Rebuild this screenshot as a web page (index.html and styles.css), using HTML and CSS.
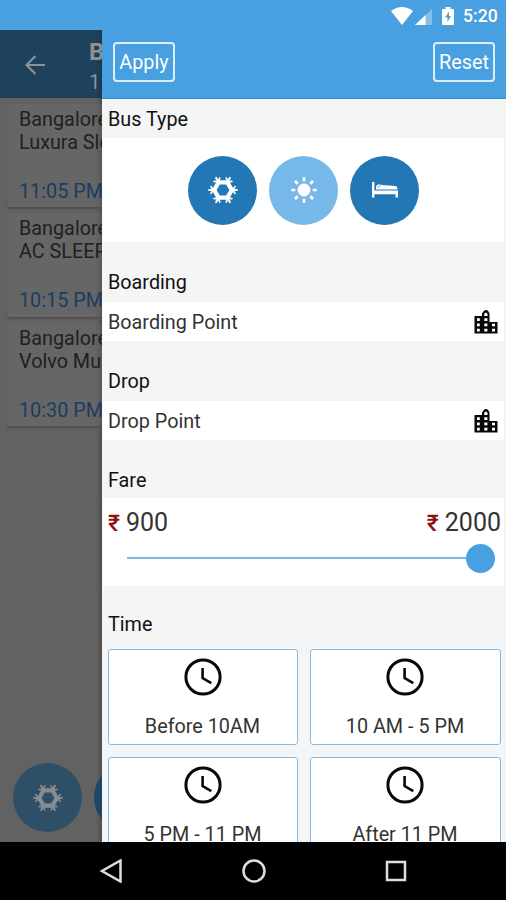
FILE: index.html
```html
<!DOCTYPE html>
<html lang="en">
<head>
<meta charset="utf-8">
<title>Bus filters</title>
<link rel="stylesheet" href="styles.css">
</head>
<body>
<svg class="defs" width="0" height="0">
  <symbol id="snow" viewBox="-15 -15 30 30">
    <g fill="none" stroke="currentColor" stroke-linecap="round">
      <path class="ring" stroke-linejoin="round" d="M8.8 0 4.4 7.6H-4.4L-8.8 0-4.4-7.6H4.4Z"/>
      <path stroke-width="2.2" d="M8 0H13.8M4 7 6.8 12M-4 7-6.8 12M-8 0H-13.8M-4-7-6.8-12M4-7 6.8-12"/>
      <path stroke-width="1.7" d="M12-3.3 9.5 0 12 3.3M8.9 8.7 4.8 8.2 3.2 12M-3.2 12-4.8 8.2-8.9 8.7M-12 3.3-9.5 0-12-3.3M-8.9-8.7-4.8-8.2-3.2-12M3.2-12 4.8-8.2 8.9-8.7"/>
    </g>
  </symbol>
  <symbol id="city" viewBox="0 0 24 24">
    <path fill="currentColor" fill-rule="evenodd" d="M.5 6H8V3.5L10 .8Q12 -.8 14 .8L15.5 3.5V12H23.5V23.5H.5ZM3 8.3V11H5.8V8.3ZM3 13.6V16.2H5.8V13.6ZM3 18.8V21.4H5.8V18.8ZM10.2 3.8V6H13.5V3.8L12 2.4ZM10.3 8.3V11H13.4V8.3ZM10.3 13.6V16.2H13.4V13.6ZM10.3 18.8V21.4H13.4V18.8ZM18 13.8V16.2H21V13.8ZM18 18.8V21.4H21V18.8Z"/>
  </symbol>
  <symbol id="clock" viewBox="0 0 38 38">
    <g fill="none" stroke="currentColor">
      <circle cx="19" cy="19" r="17.1" stroke-width="3"/>
      <path stroke-width="2.6" d="M18.6 10V20L27.3 25.2"/>
    </g>
  </symbol>
</svg>
<div class="phone">
  <div class="status">
    <svg class="wifi" viewBox="0 0 22 18"><path fill="#fff" d="M0 4Q11-4 22 4L11 18Z"/></svg>
    <svg class="signal" viewBox="0 0 17 16"><path fill="#84bfeb" d="M17 0V16H0Z"/><path fill="#fff" d="M10.5 6V16H0Z"/></svg>
    <svg class="battery" viewBox="0 0 12 18"><path fill="#fff" d="M3.5 0H8.5V2H11Q12 2 12 3V17Q12 18 11 18H1Q0 18 0 17V3Q0 2 1 2H3.5Z"/><path fill="#48a0e0" d="M7 4.5 3 10.5H5.5V15L9 9H7Z"/></svg>
    <span class="time">5:20</span>
  </div>
  <div class="screen">
    <div class="results">
      <div class="appbar">
        <svg class="back" viewBox="0 0 20 20"><path fill="none" stroke="currentColor" stroke-width="2.2" d="M20 10H2M10.5 1 1.5 10 10.5 19"/></svg>
        <div class="route"><b>B</b><span>1</span></div>
      </div>
      <div class="list">
        <div class="trip"><p>Bangalore<br>Luxura Sle</p><span class="depart">11:05 PM</span></div>
        <div class="trip"><p>Bangalore<br>AC SLEEP</p><span class="depart">10:15 PM</span></div>
        <div class="trip"><p>Bangalore<br>Volvo Mu</p><span class="depart">10:30 PM</span></div>
      </div>
      <div class="quick">
        <span class="dot"><svg class="flake"><use href="#snow"/></svg></span>
        <span class="dot"></span>
      </div>
    </div>
    <div class="drawer">
      <div class="drawer-bar"><span class="btn">Apply</span><span class="btn">Reset</span></div>
      <div class="filters">
        <h2 class="first">Bus Type</h2>
        <div class="panel types">
          <span class="type"><svg class="flake"><use href="#snow"/></svg></span>
          <span class="type light"><svg class="sun" viewBox="-13 -13 26 26"><circle r="6.4" fill="#fff"/><path stroke="#fff" stroke-width="2.7" d="M0-8.8V-12.7M0 8.8V12.7M-8.8 0H-12.7M8.8 0H12.7M-6.3-6.3-9-9M6.3 6.3 9 9M-6.3 6.3-9 9M6.3-6.3 9-9"/></svg></span>
          <span class="type"><svg class="bed" viewBox="0 0 26 16"><path fill="#fff" d="M0 0H2.4V8.6H26V15.5H23.5V12.2H2.4V15.5H0ZM4 7.4V4.6L5.5 2.4H8.5L10 3 23.5 4Q25.6 4.4 25.6 7.4Z"/><path fill="none" stroke="#2377b4" stroke-width=".7" d="M5.5 5.4 8.5 3.6"/></svg></span>
        </div>
        <h2>Boarding</h2>
        <div class="panel point"><span>Boarding Point</span><svg class="city"><use href="#city"/></svg></div>
        <h2>Drop</h2>
        <div class="panel point"><span>Drop Point</span><svg class="city"><use href="#city"/></svg></div>
        <h2 class="fare-title">Fare</h2>
        <div class="panel fare">
          <div class="prices"><span><i>₹</i>900</span><span><i>₹</i>2000</span></div>
          <div class="slider"><span class="track"></span><span class="knob"></span></div>
        </div>
        <h2 class="time-title">Time</h2>
        <div class="slots">
          <div class="slot"><svg class="clock"><use href="#clock"/></svg><span>Before 10AM</span></div>
          <div class="slot"><svg class="clock"><use href="#clock"/></svg><span>10 AM - 5 PM</span></div>
          <div class="slot"><svg class="clock"><use href="#clock"/></svg><span>5 PM - 11 PM</span></div>
          <div class="slot"><svg class="clock"><use href="#clock"/></svg><span>After 11 PM</span></div>
        </div>
      </div>
    </div>
  </div>
  <div class="nav">
    <svg viewBox="0 0 24 24"><path d="M21.5 1.5V22.5L3 12Z"/></svg>
    <svg viewBox="0 0 24 24"><circle cx="12" cy="12" r="10.5"/></svg>
    <svg viewBox="0 0 24 24"><rect x="3" y="3" width="18" height="18"/></svg>
  </div>
</div>
</body>
</html>
```
FILE: styles.css
```css
* { box-sizing: border-box; }
body { margin: 0; font-family: Roboto, "Liberation Sans", sans-serif; font-size: 19.8px; color: #222; }
.defs { position: absolute; }
svg { display: block; flex: none; }
.phone { width: 506px; height: 900px; display: flex; flex-direction: column; overflow: hidden; }
.status { height: 30px; flex: none; background: #48a0e0; display: flex; align-items: center; justify-content: flex-end; padding: 1px 9px 0 0; color: #fff; }
.wifi { width: 22px; height: 18px; }
.signal { width: 17px; height: 16px; margin: 2px 10px 0 2px; }
.battery { width: 12px; height: 18px; margin-right: 9px; }
.time { font-size: 17.6px; font-weight: 500; line-height: 30px; width: 34px; white-space: nowrap; }
.screen { height: 812px; flex: none; display: flex; overflow: hidden; background: #626262; }
.results { width: 101.5px; flex: none; display: flex; flex-direction: column; overflow: hidden; background: linear-gradient(90deg, transparent 96px, #0003 102px), #626262; white-space: nowrap; }
.appbar { height: 68px; flex: none; background: linear-gradient(90deg, transparent 95px, #0002), #1e425b; display: flex; color: #8d9194; }
.back { width: 20px; height: 20px; margin: 25px 0 0 25px; }
.route { display: flex; flex-direction: column; margin-left: 44px; padding-top: 8px; }
.route b { font-size: 24px; line-height: 29px; font-weight: 700; }
.route span { font-size: 20px; line-height: 31px; }
.list { padding: 6px 0 0 7px; display: flex; flex-direction: column; gap: 6px; }
.trip { height: 103.3px; width: 130px; padding: 4px 12px 0; border-radius: 2px; background: linear-gradient(90deg, transparent 88px, #0002 95px), #666; box-shadow: 0 2px 2px #505050; color: #202020; }
.trip p { margin: 0; line-height: 23px; height: 72px; }
.depart { display: block; line-height: 24px; color: #1b3c62; }
.quick { margin: auto 0 10px 13px; display: flex; gap: 12px; }
.dot { width: 69px; height: 69px; flex: none; border-radius: 50%; background: #2f4f67; display: flex; align-items: center; justify-content: center; color: #858d94; }
.dot + .dot { background: #1d4566; }
.flake { width: 30px; height: 30px; }
.ring { stroke-width: 4.2px; }
.dot .ring { stroke-width: 3px; }
.drawer { flex: 1; min-width: 0; display: flex; flex-direction: column; background: #f5f5f5; }
.drawer-bar { height: 69px; flex: none; background: #48a0e0; border-bottom: 1px solid #278acb; padding: 12px 11px 0 11.5px; display: flex; justify-content: space-between; }
.btn { height: 40px; width: 62px; border: 2px solid #d9efff; border-radius: 4px; color: #fff; line-height: 38px; text-align: center; }
.filters { padding: 0 2px 0 1px; }
h2 { margin: 0; font-size: 19.8px; font-weight: 400; color: #111; height: 60px; padding: 29px 5.5px 0; line-height: 24px; }
h2.first { height: 39px; padding-top: 9px; }
h2.fare-title { height: 58px; }
h2.time-title { height: 63px; padding-top: 27px; }
.panel { background: #fff; }
.types { height: 104px; display: flex; gap: 12px; align-items: center; justify-content: center; padding-left: 1px; }
.type { width: 69px; height: 69px; border-radius: 50%; background: #2377b4; color: #fff; display: flex; align-items: center; justify-content: center; }
.light { background: #76b9e9; }
.sun { width: 26px; height: 26px; }
.bed { width: 26px; height: 16px; }
.point { height: 39px; display: flex; align-items: center; justify-content: space-between; padding: 2px 6px 0 5.5px; color: #333; }
.city { width: 24px; height: 24px; color: #080808; margin-top: -2px; }
.fare { height: 88px; padding: 10px 3px 0 5.5px; color: #333; }
.prices { display: flex; justify-content: space-between; font-size: 25px; line-height: 30px; }
.prices i { font-style: normal; font-weight: 500; font-size: 23px; color: #8e1010; margin-right: 6px; }
.slider { display: flex; align-items: center; height: 30px; margin: 4px 6px 0 19px; }
.track { flex: 1; height: 2px; background: #78b9e9; }
.knob { width: 29px; height: 29px; border-radius: 50%; background: #48a0e0; }
.slots { display: grid; grid-template-columns: 190px 191px; gap: 12px; padding-left: 5px; }
.slot { height: 96px; border: 1px solid #80bbeb; border-radius: 3px; background: #fff; display: flex; flex-direction: column; align-items: center; padding-top: 8px; color: #333; }
.clock { width: 38px; height: 38px; color: #080808; margin-bottom: 19px; }
.slot span { line-height: 24px; }
.nav { height: 58px; flex: none; background: #000; display: flex; justify-content: space-between; align-items: center; padding: 0 98px 0 99px; }
.nav svg { width: 24px; height: 24px; fill: none; stroke: #ddd; stroke-width: 2.5; }
```
